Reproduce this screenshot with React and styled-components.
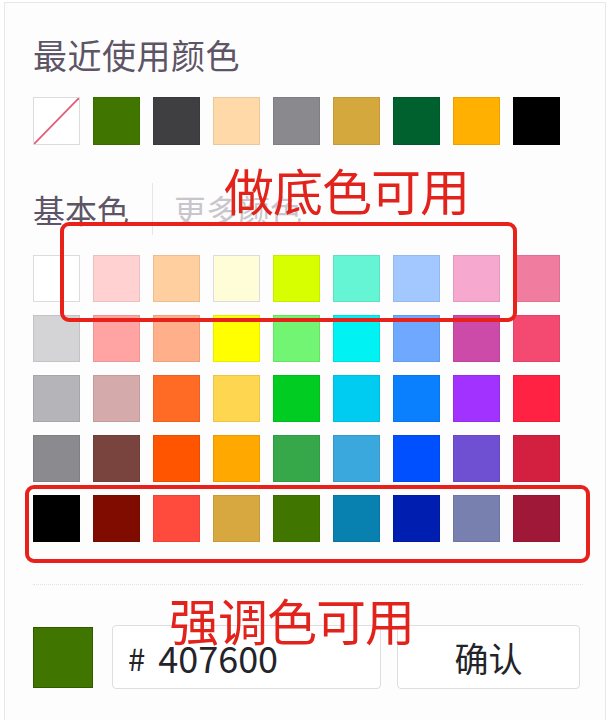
import React from "react";
import styled, { createGlobalStyle } from "styled-components";

const GlobalStyle = createGlobalStyle`
  html, body {
    margin: 0;
    padding: 0;
    background: #ffffff;
  }
  body {
    font-family: "Noto Sans CJK SC", "Noto Sans", sans-serif;
  }
`;

const Page = styled.div`
  position: relative;
  width: 608px;
  height: 722px;
  overflow: hidden;
  padding: 2px 2px 0 4px;
  box-sizing: border-box;
`;

const Panel = styled.div`
  height: 718px;
  box-sizing: border-box;
  border: 1px solid #e8e8ec;
  border-bottom: none;
  background: #fdfdfe;
  padding: 32px 0 0 28px;
  display: flex;
  flex-direction: column;
`;

const Title = styled.div`
  font-size: 34px;
  line-height: 40px;
  color: #5d5566;
  letter-spacing: 0.5px;
`;

const Grid = styled.div`
  display: grid;
  grid-template-columns: repeat(9, 47px);
  grid-auto-rows: ${(p) => p.$h}px;
  column-gap: 13px;
  row-gap: 13px;
  margin-top: ${(p) => p.$top}px;
`;

const Swatch = styled.div`
  background: ${(p) => p.$c};
  box-sizing: border-box;
  border: 1px solid ${(p) => (p.$light ? "#dcdce0" : "rgba(0,0,0,0.08)")};
  position: relative;
  overflow: hidden;
`;

const Tabs = styled.div`
  display: flex;
  align-items: center;
  margin-top: 38px;
  height: 52px;
`;

const Tab = styled.div`
  font-size: 32px;
  line-height: 40px;
  color: ${(p) => (p.$active ? "#5d5566" : "#c8c6cc")};
`;

const TabSep = styled.div`
  width: 1px;
  align-self: stretch;
  background: #e6e6ea;
  margin: 0 21px 0 23px;
`;

const Divider = styled.div`
  margin-top: 42px;
  width: 550px;
  border-top: 1px dotted #e2e2e6;
`;

const Footer = styled.div`
  display: flex;
  align-items: center;
  margin-top: 40px;
`;

const Current = styled.div`
  width: 60px;
  height: 61px;
  background: #407600;
  border: 1px solid #2f5a00;
  box-sizing: border-box;
  margin-right: 19px;
`;

const HexInput = styled.div`
  width: 269px;
  height: 64px;
  box-sizing: border-box;
  border: 1px solid #dedee2;
  border-radius: 4px;
  background: #fff;
  display: flex;
  align-items: center;
  padding-left: 15px;
  font-size: 36px;
  color: #25232a;
  margin-right: 16px;
`;

const Hash = styled.span`
  font-size: 31px;
  margin-right: 13px;
`;

const ConfirmBtn = styled.div`
  width: 183px;
  height: 64px;
  box-sizing: border-box;
  border: 1px solid #dedee2;
  border-radius: 4px;
  background: #fff;
  display: flex;
  align-items: center;
  justify-content: center;
  font-size: 34px;
  color: #25232a;
`;

const MarkBox = styled.div`
  position: absolute;
  left: ${(p) => p.$x}px;
  top: ${(p) => p.$y}px;
  width: ${(p) => p.$w}px;
  height: ${(p) => p.$h}px;
  box-sizing: border-box;
  border: 4px solid #e8211b;
  border-radius: 9px;
`;

const MarkText = styled.div`
  position: absolute;
  left: ${(p) => p.$x}px;
  top: ${(p) => p.$y}px;
  font-size: 50px;
  line-height: 50px;
  color: #e2231c;
  letter-spacing: -1px;
`;

const NoColor = () => (
  <svg width="100%" height="100%" viewBox="0 0 48 48" preserveAspectRatio="none">
    <line x1="0" y1="48" x2="48" y2="0" stroke="#e0607a" strokeWidth="2" />
  </svg>
);

const recent = [
  "none", "#407600", "#3f3f41", "#ffd9a8", "#8a8a8e",
  "#d4a83c", "#00612e", "#ffb000", "#000000",
];

const basic = [
  ["#ffffff", "#ffd1d1", "#ffcf9f", "#fffcd8", "#d8ff00", "#66f5d4", "#a3c8ff", "#f7a8cf", "#f07ca0"],
  ["#d4d4d7", "#ffa3a3", "#ffb08a", "#ffff00", "#72f572", "#00f2f2", "#6fa8ff", "#cc4aa8", "#f44a72"],
  ["#b5b4b9", "#d4aaaa", "#ff6a24", "#ffd650", "#00cc22", "#00ccf2", "#0a80ff", "#a232ff", "#ff2242"],
  ["#8b8a8f", "#7a443e", "#ff5400", "#ffa800", "#36a84a", "#3aa8dc", "#0050ff", "#7050d2", "#d42040"],
  ["#000000", "#800c00", "#ff4a3e", "#d8a840", "#407600", "#0880b0", "#001eb0", "#7880b0", "#a01838"],
];

export default function App() {
  return (
    <Page>
      <GlobalStyle />
      <Panel>
        <Title>最近使用颜色</Title>
        <Grid $h={48} $top={22}>
          {recent.map((c, i) =>
            c === "none" ? (
              <Swatch key={i} $c="#fff" $light>
                <NoColor />
              </Swatch>
            ) : (
              <Swatch key={i} $c={c} />
            )
          )}
        </Grid>
        <Tabs>
          <Tab $active>基本色</Tab>
          <TabSep />
          <Tab>更多颜色</Tab>
        </Tabs>
        <Grid $h={47} $top={20}>
          {basic.flat().map((c, i) => (
            <Swatch key={i} $c={c} $light={c === "#ffffff" || c === "#fffcd8"} />
          ))}
        </Grid>
        <Divider />
        <Footer>
          <Current />
          <HexInput>
            <Hash>#</Hash>407600
          </HexInput>
          <ConfirmBtn>确认</ConfirmBtn>
        </Footer>
      </Panel>
      <MarkBox $x={60} $y={222} $w={457} $h={100} />
      <MarkBox $x={25} $y={485} $w={565} $h={78} />
      <MarkText $x={224} $y={164}>做底色可用</MarkText>
      <MarkText $x={169} $y={594}>强调色可用</MarkText>
    </Page>
  );
}
